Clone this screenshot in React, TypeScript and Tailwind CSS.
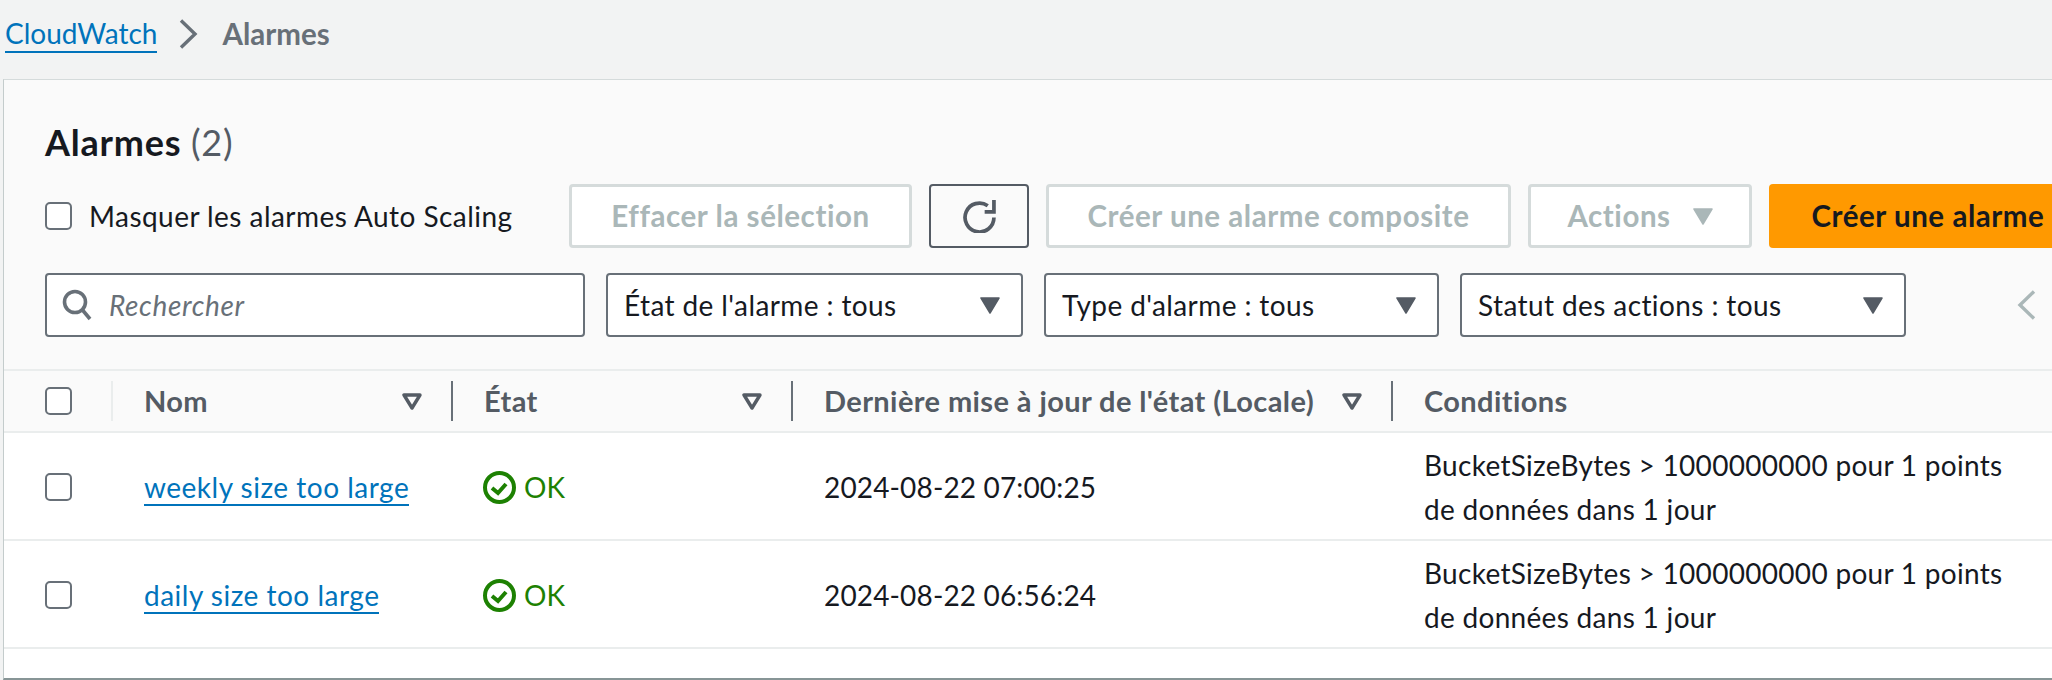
const font = "font-['Lato','Liberation_Sans',sans-serif]";
const disabledBtn = "h-[64px] shrink-0 flex items-center justify-center bg-white border-[3px] border-[#d5dbdb] rounded-[4px] font-bold text-[29.5px] tracking-[0.55px] text-[#aab7b8]";

function Checkbox() {
    return <div className="w-[27px] h-[28px] bg-white border-2 border-[#687078] rounded-[5px] shrink-0" />;
}

function Caret({ color = "#545b64", outline = false }: { color?: string; outline?: boolean }) {
    return (
        <svg viewBox="0 0 20 17" className="w-[20px] h-[17px] shrink-0">
            {outline ? (
                <path d="M2 2h16l-8 13z" fill="none" stroke={color} strokeWidth="3.4" strokeLinejoin="round" />
            ) : (
                <path d="M1 1h18l-9 15z" fill={color} stroke={color} strokeWidth="1.5" strokeLinejoin="round" />
            )}
        </svg>
    );
}

function Chevron({ left = false, color }: { left?: boolean; color: string }) {
    return (
        <svg viewBox="0 0 19 30" className="w-[19px] h-[30px] shrink-0" fill="none" stroke={color} strokeWidth="3.4">
            <path d={left ? "M17 1.5L3 15l14 13.5" : "M2 1.5L16 15 2 28.5"} />
        </svg>
    );
}

function SelectBox({ label, width }: { label: string; width: string }) {
    return (
        <div className={`${width} h-[64px] shrink-0 flex items-center justify-between pl-[16px] pr-[21px] bg-white border-2 border-[#687078] rounded-[4px] text-[#16191f] tracking-[0.4px]`}>
            <span>{label}</span>
            <Caret />
        </div>
    );
}

function HeaderCell({ label, sep = "bg-[#687078]", sort = true }: { label: string; sep?: string; sort?: boolean }) {
    return (
        <div className="flex items-center h-full">
            <div className={`w-[2px] h-[40px] ${sep} shrink-0`} />
            <span className="ml-[31px] font-bold text-[29px] tracking-[0.4px] text-[#545b64] whitespace-nowrap">{label}</span>
            {sort && <div className="ml-auto mr-[29px]"><Caret outline /></div>}
        </div>
    );
}

function OkIcon() {
    return (
        <svg viewBox="0 0 33 33" className="w-[33px] h-[33px] shrink-0">
            <circle cx="16.5" cy="16.5" r="14.5" fill="none" stroke="#1d8102" strokeWidth="4" />
            <path d="M9 17l6 5 8-9" fill="none" stroke="#1d8102" strokeWidth="4" />
        </svg>
    );
}

const rows = [
    { name: "weekly size too large", date: "2024-08-22 07:00:25" },
    { name: "daily size too large", date: "2024-08-22 06:56:24" },
];

const cols = "grid grid-cols-[107px_340px_340px_600px_1fr]";

export default function App() {
    return (
        <div className={`w-[2052px] h-[680px] overflow-hidden flex flex-col bg-[#f2f3f3] text-[28px] leading-[44px] ${font}`}>
            {/* Breadcrumb */}
            <div className="h-[79px] flex items-center pl-[5px] pb-[12px] shrink-0">
                <a className="text-[#0073bb] border-b-2 border-[#0073bb] leading-[36px]">CloudWatch</a>
                <div className="ml-[22px] mr-[24px]"><Chevron color="#687078" /></div>
                <span className="font-bold text-[29.5px] text-[#687078]">Alarmes</span>
            </div>

            {/* Panel */}
            <div className="flex-1 ml-[3px] flex flex-col bg-[#fafafa] border-l border-b-2 border-t border-[#d5dbdb] border-l-[#c4cccc] border-b-[#879596]">
                <div className="pl-[41px] pt-[40px] shrink-0">
                    <div className="h-[44px] text-[36px] tracking-[0.8px] font-bold text-[#16191f] whitespace-nowrap">
                        Alarmes <span className="font-normal text-[#545b64]">(2)</span>
                    </div>
                    <div className="mt-[20px] flex items-center gap-[17px] whitespace-nowrap">
                        <label className="w-[507px] shrink-0 flex items-center gap-[17px] text-[#16191f] tracking-[0.45px]">
                            <Checkbox />
                            Masquer les alarmes Auto Scaling
                        </label>
                        <div className={`w-[343px] ${disabledBtn}`}>Effacer la sélection</div>
                        <div className="w-[100px] h-[64px] shrink-0 flex items-center justify-center border-2 border-[#545b64] rounded-[4px]">
                            <svg viewBox="0 0 32 32" className="w-[33px] h-[33px]" fill="none" stroke="#545b64" strokeWidth="3.6">
                                <path d="M30 17a14 14 0 1 1-6-11.5" />
                                <path d="M30 0v11.5h-9" />
                            </svg>
                        </div>
                        <div className={`w-[465px] ${disabledBtn}`}>Créer une alarme composite</div>
                        <div className={`w-[224px] gap-[22px] ${disabledBtn}`}>
                            Actions
                            <Caret color="#aab7b8" />
                        </div>
                        <div className="w-[318px] h-[64px] shrink-0 flex items-center justify-center bg-[#ff9900] rounded-[4px] font-bold text-[29.5px] tracking-[0.55px] text-[#16191f]">Créer une alarme</div>
                    </div>
                    <div className="mt-[25px] flex items-center gap-[21px] whitespace-nowrap">
                        <div className="w-[540px] h-[64px] shrink-0 flex items-center bg-white border-2 border-[#687078] rounded-[4px] pl-[15px]">
                            <svg viewBox="0 0 30 32" className="w-[30px] h-[32px] shrink-0" fill="none" stroke="#687078" strokeWidth="3.6">
                                <circle cx="13" cy="13" r="10.5" />
                                <path d="M20.5 21l7.5 9" />
                            </svg>
                            <span className="ml-[17px] italic text-[#687078] tracking-[0.65px]">Rechercher</span>
                        </div>
                        <SelectBox label="État de l'alarme : tous" width="w-[417px]" />
                        <SelectBox label="Type d'alarme : tous" width="w-[395px]" />
                        <SelectBox label="Statut des actions : tous" width="w-[446px]" />
                        <div className="ml-[90px]"><Chevron left color="#aab7b8" /></div>
                    </div>
                </div>

                {/* Table */}
                <div className="mt-[32px] bg-[#fafafa] border-y-2 border-[#eaeded] h-[64px] shrink-0">
                    <div className={`${cols} h-full items-center`}>
                        <div className="pl-[41px]"><Checkbox /></div>
                        <HeaderCell label="Nom" sep="bg-[#eaeded]" />
                        <HeaderCell label="État" />
                        <HeaderCell label="Dernière mise à jour de l'état (Locale)" />
                        <HeaderCell label="Conditions" sort={false} />
                    </div>
                </div>
                <div className="flex-1 bg-white text-[#16191f]">
                    {rows.map((r) => (
                        <div key={r.name} className={`${cols} h-[108px] pt-[2px] items-center border-b-2 border-[#eaeded]`}>
                            <div className="pl-[41px]"><Checkbox /></div>
                            <div className="pl-[33px]">
                                <a className="text-[#0073bb] border-b-2 border-[#0073bb] leading-[34px] inline-block tracking-[0.5px]">{r.name}</a>
                            </div>
                            <div className="pl-[32px] flex items-center gap-[8px] text-[#1d8102]">
                                <OkIcon />
                                OK
                            </div>
                            <div className="pl-[33px] tracking-[0.15px]">{r.date}</div>
                            <div className="pl-[33px] w-[620px] tracking-[0.3px]">BucketSizeBytes &gt; 1000000000 pour 1 points de données dans 1 jour</div>
                        </div>
                    ))}
                </div>
            </div>
        </div>
    );
}
